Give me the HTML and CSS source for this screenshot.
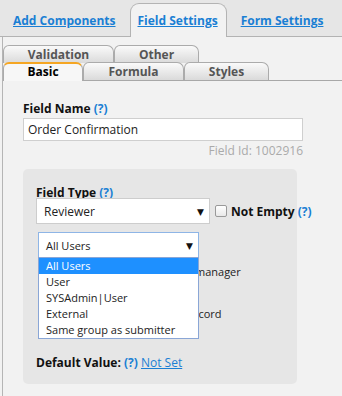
FILE: index.html
```html
<!DOCTYPE html>
<html>
<head>
<meta charset="utf-8">
<link rel="stylesheet" href="styles.css">
</head>
<body>
<div class="topbar">
  <a class="toptab">Add Components</a>
  <a class="toptab active">Field Settings</a>
  <a class="toptab">Form Settings</a>
</div>
<div class="main">
  <div class="subtabs">
    <div class="row row1">
      <div class="stab w-val">Validation</div>
      <div class="stab w-oth">Other</div>
    </div>
    <div class="row row2">
      <div class="stab active w-bas">Basic</div>
      <div class="stab w-for">Formula</div>
      <div class="stab w-sty">Styles</div>
    </div>
  </div>
  <div class="content">
    <div class="label">Field Name <span class="q">(?)</span></div>
    <div class="input">Order Confirmation</div>
    <div class="fieldid">Field Id: 1002916</div>
    <div class="panel">
      <div class="label">Field Type <span class="q">(?)</span></div>
      <div class="typerow">
        <div class="select sel1"><span>Reviewer</span><span class="arrow">▼</span></div>
        <span class="checkbox"></span>
        <span class="bold">Not Empty</span>&nbsp;<span class="q">(?)</span>
      </div>
      <div class="userwrap">
        <div class="select sel2 focus"><span>All Users</span><span class="arrow">▼</span></div>
        <div class="behind">
          <div class="bline">Same group as manager</div>
          <div class="bline gap">Submitter of the record</div>
        </div>
        <ul class="dropdown">
          <li class="hl">All Users</li>
          <li>User</li>
          <li>SYSAdmin|User</li>
          <li>External</li>
          <li>Same group as submitter</li>
        </ul>
      </div>
      <div class="default"><span class="bold">Default Value:</span> <span class="q">(?)</span> <a class="link">Not Set</a></div>
    </div>
  </div>
</div>
</body>
</html>
```

FILE: styles.css
```css
html, body {
  margin: 0;
  padding: 0;
}
body {
  background: #f2f2f2;
  font-family: "Open Sans", "DejaVu Sans", sans-serif;
  font-size: 12px;
  color: #222;
  width: 342px;
  height: 396px;
  overflow: hidden;
}
.topbar {
  height: 36px;
  background: #e6e6e6;
  border-bottom: 1px solid #b3b3b3;
  display: flex;
  align-items: flex-end;
  padding-left: 4px;
  gap: 5px;
  white-space: nowrap;
}
.toptab {
  flex-shrink: 0;
  box-sizing: border-box;
  height: 34px;
  margin-bottom: -1px;
  padding: 0 8px 0 8px;
  border: 1px solid transparent;
  border-bottom: none;
  border-radius: 9px 9px 0 0;
  color: #1a7fd4;
  font-weight: bold;
  font-size: 12px;
  text-decoration: underline;
  line-height: 34px;
}
.toptab.active {
  background: #f2f2f2;
  border-color: #b3b3b3;
  padding: 0 8px 0 7px;
}
.main {
  margin-left: 2px;
  border-left: 1px solid #b5b5b5;
  height: 359px;
}
.subtabs {
  padding-top: 8px;
}
.row {
  display: flex;
}
.row2 {
  border-bottom: 1px solid #a8a8a8;
  margin-top: -1px;
}
.stab {
  flex-shrink: 0;
  box-sizing: border-box;
  height: 18px;
  border: 1px solid #ababab;
  border-bottom: none;
  border-radius: 6px 7px 0 0;
  background: linear-gradient(#fafafa, #dadada);
  font-weight: bold;
  font-size: 12px;
  color: #555;
  text-align: center;
  line-height: 17px;
  white-space: nowrap;
}
.w-val { width: 111px; }
.w-oth { width: 85px; }
.w-bas { width: 80px; }
.w-for { width: 101px; }
.w-sty { width: 85px; }
.stab.active {
  background: #f7f7f7;
  border-top: 2px solid #f5a623;
  color: #000;
  margin-bottom: -1px;
  height: 19px;
  line-height: 15px;
}
.content {
  padding: 20px 0 0 20px;
}
.label {
  font-weight: bold;
  font-size: 12px;
  color: #111;
  line-height: 16px;
}
.q {
  color: #1a7fd4;
  font-weight: bold;
}
.bold {
  font-weight: bold;
  color: #111;
}
.input {
  box-sizing: border-box;
  width: 280px;
  height: 23px;
  margin-top: 1px;
  background: #fff;
  border: 1px solid #cfcfcf;
  padding-left: 4px;
  font-size: 12px;
  line-height: 21px;
  color: #222;
}
.fieldid {
  width: 280px;
  text-align: right;
  color: #aaa;
  font-size: 12px;
  margin-top: 2px;
  line-height: 16px;
}
.panel {
  margin-top: 10px;
  width: 274px;
  height: 215px;
  box-sizing: border-box;
  background: #e6e6e6;
  border-radius: 5px;
  padding: 16px 0 0 13px;
}
.typerow {
  display: flex;
  align-items: center;
  margin-top: -3px;
  white-space: nowrap;
}
.select {
  flex-shrink: 0;
  box-sizing: border-box;
  background: #fff;
  border: 1px solid #cdcdcd;
  display: flex;
  justify-content: space-between;
  align-items: center;
  font-size: 12px;
  color: #222;
}
.sel1 {
  width: 174px;
  height: 26px;
  padding: 0 5px 0 7px;
}
.arrow {
  font-size: 9px;
  color: #111;
}
.checkbox {
  flex-shrink: 0;
  box-sizing: border-box;
  width: 12px;
  height: 12px;
  border: 1px solid #999;
  border-radius: 2px;
  background: linear-gradient(#fff, #e8e8e8);
  margin: 0 4px 0 5px;
}
.userwrap {
  position: relative;
  margin: 8px 0 0 2px;
}
.sel2 {
  width: 161px;
  height: 26px;
  padding: 0 5px 0 7px;
  border: 1px solid #8eb5e6;
  font-size: 11px;
}
.behind {
  padding: 6px 0 0 0;
  font-size: 11px;
  color: #222;
  line-height: 16px;
  height: 90px;
  white-space: nowrap;
}
.bline {
  padding-left: 78px;
}
.bline.gap {
  margin-top: 26px;
  padding-left: 63px;
}
.dropdown {
  position: absolute;
  left: 0;
  top: 25px;
  width: 161px;
  box-sizing: border-box;
  margin: 0;
  padding: 0;
  list-style: none;
  background: #fff;
  border: 1px solid #8aa6d6;
  font-size: 11px;
  color: #222;
}
.dropdown li {
  height: 16px;
  line-height: 16px;
  padding-left: 7px;
  white-space: nowrap;
}
.dropdown li.hl {
  background: #1e90ff;
  color: #fff;
}
.default {
  margin-top: 0;
  font-size: 12px;
}
.link {
  color: #1a7fd4;
  text-decoration: underline;
}
```
